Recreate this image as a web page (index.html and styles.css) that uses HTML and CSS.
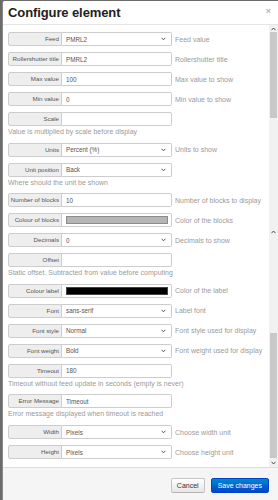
FILE: index.html
```html
<!DOCTYPE html>
<html>
<head>
<meta charset="utf-8">
<link rel="stylesheet" href="styles.css">
</head>
<body>
<div class="modal">
  <div class="modal-header">
    <h3 class="title">Configure element</h3>
    <span class="close">×</span>
  </div>
  <div class="modal-body">
    <div class="content">
      <div class="group"><div class="row"><span class="addon">Feed</span><div class="field select"><span>PMRL2</span><svg class="chev" width="5" height="4" viewBox="0 0 5 4"><path d="M0.6 0.8 L2.5 2.8 L4.4 0.8" fill="none" stroke="#444" stroke-width="0.9"/></svg></div><span class="help-inline">Feed value</span></div></div>
      <div class="group"><div class="row"><span class="addon">Rollershutter title</span><input class="field" value="PMRL2"><span class="help-inline">Rollershutter title</span></div></div>
      <div class="group"><div class="row"><span class="addon">Max value</span><input class="field" value="100"><span class="help-inline">Max value to show</span></div></div>
      <div class="group"><div class="row"><span class="addon">Min value</span><input class="field" value="0"><span class="help-inline">Min value to show</span></div></div>
      <div class="group"><div class="row"><span class="addon">Scale</span><input class="field" value=""></div><div class="help-block">Value is multiplied by scale before display</div></div>
      <div class="group"><div class="row"><span class="addon">Units</span><div class="field select"><span>Percent (%)</span><svg class="chev" width="5" height="4" viewBox="0 0 5 4"><path d="M0.6 0.8 L2.5 2.8 L4.4 0.8" fill="none" stroke="#444" stroke-width="0.9"/></svg></div><span class="help-inline">Units to show</span></div></div>
      <div class="group"><div class="row"><span class="addon">Unit position</span><div class="field select"><span>Back</span><svg class="chev" width="5" height="4" viewBox="0 0 5 4"><path d="M0.6 0.8 L2.5 2.8 L4.4 0.8" fill="none" stroke="#444" stroke-width="0.9"/></svg></div></div><div class="help-block">Where should the unit be shown</div></div>
      <div class="group"><div class="row"><span class="addon">Number of blocks</span><input class="field" value="10"><span class="help-inline">Number of blocks to display</span></div></div>
      <div class="group"><div class="row"><span class="addon">Colour of blocks</span><div class="field color"><span class="swatch grey"></span></div><span class="help-inline">Color of the blocks</span></div></div>
      <div class="group"><div class="row"><span class="addon">Decimals</span><div class="field select"><span>0</span><svg class="chev" width="5" height="4" viewBox="0 0 5 4"><path d="M0.6 0.8 L2.5 2.8 L4.4 0.8" fill="none" stroke="#444" stroke-width="0.9"/></svg></div><span class="help-inline">Decimals to show</span></div></div>
      <div class="group"><div class="row"><span class="addon">Offset</span><input class="field" value=""></div><div class="help-block">Static offset. Subtracted from value before computing</div></div>
      <div class="group"><div class="row"><span class="addon">Colour label</span><div class="field color"><span class="swatch black"></span></div><span class="help-inline">Color of the label</span></div></div>
      <div class="group"><div class="row"><span class="addon">Font</span><div class="field select"><span>sans-serif</span><svg class="chev" width="5" height="4" viewBox="0 0 5 4"><path d="M0.6 0.8 L2.5 2.8 L4.4 0.8" fill="none" stroke="#444" stroke-width="0.9"/></svg></div><span class="help-inline">Label font</span></div></div>
      <div class="group"><div class="row"><span class="addon">Font style</span><div class="field select"><span>Normal</span><svg class="chev" width="5" height="4" viewBox="0 0 5 4"><path d="M0.6 0.8 L2.5 2.8 L4.4 0.8" fill="none" stroke="#444" stroke-width="0.9"/></svg></div><span class="help-inline">Font style used for display</span></div></div>
      <div class="group"><div class="row"><span class="addon">Font weight</span><div class="field select"><span>Bold</span><svg class="chev" width="5" height="4" viewBox="0 0 5 4"><path d="M0.6 0.8 L2.5 2.8 L4.4 0.8" fill="none" stroke="#444" stroke-width="0.9"/></svg></div><span class="help-inline">Font weight used for display</span></div></div>
      <div class="group"><div class="row"><span class="addon">Timeout</span><input class="field" value="180"></div><div class="help-block">Timeout without feed update in seconds (empty is never)</div></div>
      <div class="group"><div class="row"><span class="addon">Error Message</span><input class="field" value="Timeout"></div><div class="help-block">Error message displayed when timeout is reached</div></div>
      <div class="group"><div class="row"><span class="addon">Width</span><div class="field select"><span>Pixels</span><svg class="chev" width="5" height="4" viewBox="0 0 5 4"><path d="M0.6 0.8 L2.5 2.8 L4.4 0.8" fill="none" stroke="#444" stroke-width="0.9"/></svg></div><span class="help-inline">Choose width unit</span></div></div>
      <div class="group"><div class="row"><span class="addon">Height</span><div class="field select"><span>Pixels</span><svg class="chev" width="5" height="4" viewBox="0 0 5 4"><path d="M0.6 0.8 L2.5 2.8 L4.4 0.8" fill="none" stroke="#444" stroke-width="0.9"/></svg></div><span class="help-inline">Choose height unit</span></div></div>
    </div>
    <div class="scrollbar">
      <div class="arrow a-top"><svg width="5" height="4" viewBox="0 0 5 4"><path d="M0.5 3.2 L2.5 1 L4.5 3.2" fill="none" stroke="#505050" stroke-width="1"/></svg></div>
      <div class="thumb t1"></div>
      <div class="gap g1"></div>
      <div class="arrow a-mid"><svg width="5" height="4" viewBox="0 0 5 4"><path d="M0.5 3.2 L2.5 1 L4.5 3.2" fill="none" stroke="#505050" stroke-width="1"/></svg></div>
      <div class="gap g2"></div>
      <div class="thumb t2"></div>
      <div class="arrow a-bot"><svg width="5" height="4" viewBox="0 0 5 4"><path d="M0.5 0.8 L2.5 3 L4.5 0.8" fill="none" stroke="#505050" stroke-width="1"/></svg></div>
    </div>
  </div>
  <div class="modal-footer">
    <button class="btn">Cancel</button>
    <button class="btn btn-primary">Save changes</button>
  </div>
</div>
</body>
</html>
```
FILE: styles.css
```css
* { box-sizing: border-box; }
html, body { margin: 0; padding: 0; }
body {
  background: #6b6b6b;
  font-family: "Liberation Sans", Arial, sans-serif;
  width: 278px;
  height: 500px;
  overflow: hidden;
}
.modal {
  margin: 1px 0 0 2px;
  height: 499px;
  background: #fff;
  border-left: 1px solid #8a8a8a;
  border-radius: 2px 0 0 0;
  display: flex;
  flex-direction: column;
}
.modal-header {
  height: 24px;
  flex: none;
  border-bottom: 1px solid #e5e5e5;
  display: flex;
  align-items: center;
  justify-content: space-between;
  padding: 0 7px 1px 5px;
}
.title {
  margin: 0;
  font-size: 13px;
  font-weight: bold;
  color: #222;
  letter-spacing: -0.1px;
}
.close {
  font-size: 9px;
  color: #b5b5b5;
  font-weight: bold;
  margin-top: -3px;
}
.modal-body {
  flex: 1;
  display: flex;
  min-height: 0;
}
.content {
  flex: 1;
  padding: 7px 0 0 5px;
  overflow: hidden;
}
.group { margin-bottom: 6px; }
.row {
  display: flex;
  align-items: center;
  height: 14px;
}
.addon {
  width: 54px;
  height: 14px;
  flex: none;
  border: 1px solid #ccc;
  background: #eee;
  border-radius: 2px 0 0 2px;
  font-size: 6.2px;
  line-height: 12px;
  color: #555;
  text-align: right;
  padding-right: 2px;
  white-space: nowrap;
}
.field {
  width: 110px;
  height: 14px;
  flex: none;
  border: 1px solid #ccc;
  border-left: 0;
  border-radius: 0 2px 2px 0;
  padding: 0 4px;
  font-family: "Liberation Sans", Arial, sans-serif;
  font-size: 6.3px;
  color: #555;
  background: #fff;
  outline: none;
  margin: 0;
}
.select {
  display: flex;
  align-items: center;
  justify-content: space-between;
  padding-right: 5px;
}
.chev { display: block; }
.color {
  padding: 2px 3px 2px 4px;
  display: flex;
}
.swatch {
  flex: 1;
  border: 1px solid #777;
}
.swatch.grey { background: #b5b5b5; border-color: #8c8c8c; }
.swatch.black { background: #000; border-color: #444; }
.help-inline {
  margin-left: 3px;
  font-size: 7px;
  color: #9a9a9a;
  white-space: nowrap;
}
.help-block {
  font-size: 7px;
  line-height: 10px;
  color: #9a9a9a;
  margin: 1px 0 -0.4px 0;
  white-space: nowrap;
}
.scrollbar {
  width: 9px;
  flex: none;
  background: #f1f1f1;
  display: flex;
  flex-direction: column;
}
.arrow {
  display: flex;
  align-items: center;
  justify-content: center;
}
.a-top { height: 7px; }
.a-mid { height: 8px; }
.a-bot { height: 9px; }
.thumb { margin: 0 1px; background: #c8c8c8; }
.t1 { height: 86px; }
.t2 { height: 125px; }
.g1 { height: 110px; }
.g2 { height: 97px; }
.modal-footer {
  height: 33px;
  flex: none;
  border-top: 1px solid #ddd;
  background: #f5f5f5;
  display: flex;
  justify-content: flex-end;
  align-items: flex-start;
  gap: 6px;
  padding: 10px 9px 0 0;
}
.btn {
  height: 15px;
  padding: 0 5px;
  font-family: "Liberation Sans", Arial, sans-serif;
  font-size: 7px;
  color: #333;
  border: 1px solid #c5c5c5;
  border-bottom-color: #b3b3b3;
  border-radius: 2px;
  background: linear-gradient(#ffffff, #e6e6e6);
  margin: 0;
}
.btn-primary {
  color: #fff;
  border-color: #0044cc;
  background: linear-gradient(#0088cc, #0044cc);
  padding: 0 6px;
}
```
